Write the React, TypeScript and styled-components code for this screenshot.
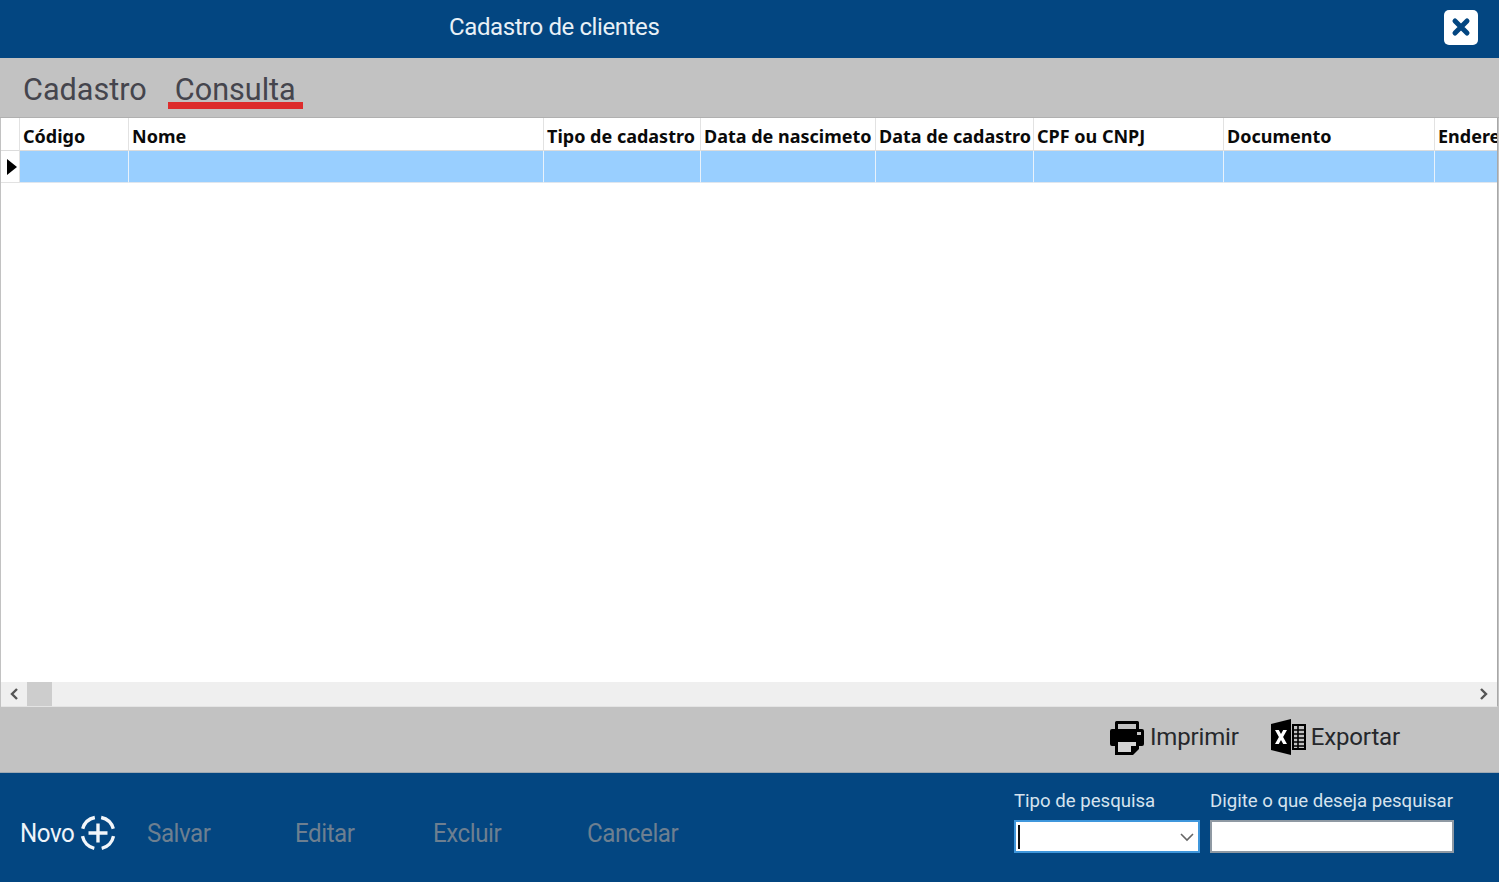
import React from 'react';
import styled, { createGlobalStyle } from 'styled-components';

const GlobalStyle = createGlobalStyle`
  html, body {
    margin: 0;
    padding: 0;
    background: #c2c2c2;
    font-family: Roboto, "Liberation Sans", sans-serif;
  }
`;

const Page = styled.div`
  width: 1499px;
  height: 882px;
  display: flex;
  flex-direction: column;
  overflow: hidden;
`;

const TitleBar = styled.header`
  height: 58px;
  flex: none;
  background: #034681;
  display: flex;
  align-items: center;
  justify-content: space-between;
  padding: 0 21px 4px 449px;
  box-sizing: border-box;
`;

const Title = styled.h1`
  margin: 0;
  font-size: 24px;
  font-weight: 400;
  letter-spacing: -0.4px;
  color: #e8f0f6;
`;

const CloseButton = styled.button`
  width: 34px;
  height: 35px;
  border: 0;
  padding: 0;
  border-radius: 5px;
  background: #fff;
  display: flex;
  align-items: center;
  justify-content: center;
`;

const Tabs = styled.nav`
  height: 60px;
  flex: none;
  display: flex;
  padding-left: 16px;
  gap: 14px;
  box-sizing: border-box;
  border-bottom: 1px solid #b0b0b0;
`;

const Tab = styled.div<{ $active?: boolean }>`
  height: 51px;
  padding: 13px 7px 0;
  box-sizing: border-box;
  font-size: 30.6px;
  line-height: 37px;
  color: #45454d;
  border-bottom: 7px solid ${(p) => (p.$active ? '#dd2c2c' : 'transparent')};
`;

const GridPanel = styled.section`
  height: 589px;
  flex: none;
  margin: 0 1px;
  box-sizing: border-box;
  background: #fff;
  display: flex;
  flex-direction: column;
  border-bottom: 1px solid #e4e4e4;
  border-right: 1px solid #a8a8a8;
`;

const HeaderRow = styled.div`
  display: grid;
  grid-template-columns: 19px 109px 415px 157px 175px 158px 190px 211px 1fr;
  height: 33px;
  flex: none;
`;

const HeaderCell = styled.div`
  font-family: "Noto Sans", "Open Sans", sans-serif;
  font-weight: 700;
  font-size: 18px;
  line-height: 36px;
  color: #0a0a0a;
  padding-left: 3px;
  white-space: nowrap;
  overflow: hidden;
  border-right: 1px solid #e2e2e2;
  border-bottom: 1px solid #dcdcdc;
  &:last-child {
    border-right: 0;
  }
`;

const CornerCell = styled(HeaderCell)`
  padding: 0;
`;

const DataRow = styled(HeaderRow)`
  height: 32px;
`;

const RowMarker = styled.div`
  display: flex;
  align-items: center;
  padding-left: 6px;
  border-right: 1px solid #e2e2e2;
  border-bottom: 1px solid #e2e2e2;
`;

const DataCell = styled.div`
  background: #99cfff;
  border-right: 1px solid #e8f2fb;
  border-bottom: 1px solid #dfe6ee;
  &:last-child {
    border-right: 0;
  }
`;

const GridBody = styled.div`
  flex: 1;
`;

const ScrollBar = styled.div`
  height: 24px;
  flex: none;
  background: #efefef;
  display: flex;
  align-items: center;
`;

const ScrollArrow = styled.div`
  width: 26px;
  flex: none;
  display: flex;
  align-items: center;
  justify-content: center;
  height: 100%;
`;

const ScrollThumb = styled.div`
  width: 25px;
  height: 100%;
  background: #cdcdcd;
`;

const ScrollTrack = styled.div`
  flex: 1;
`;

const ActionBar = styled.div`
  height: 66px;
  flex: none;
  display: flex;
  align-items: center;
  justify-content: flex-end;
  padding: 0 99px 5px 0;
  gap: 31px;
  border-bottom: 1px solid #9fa9b3;
  box-sizing: border-box;
`;

const ActionButton = styled.div`
  display: flex;
  align-items: center;
  gap: 5px;
  font-size: 24px;
  letter-spacing: -0.15px;
  color: #26282c;
`;

const Footer = styled.footer`
  flex: 1;
  background: #034681;
  display: flex;
  justify-content: space-between;
  padding: 0 45px 0 20px;
`;

const CommandList = styled.div`
  display: flex;
  align-items: center;
  padding-top: 10px;
`;

const Command = styled.div<{ $disabled?: boolean; $width: number }>`
  width: ${(p) => p.$width}px;
  display: flex;
  align-items: center;
  gap: 1px;
  font-size: 26px;
  color: ${(p) => (p.$disabled ? '#6d7f90' : '#eef4f9')};
`;

const CommandLabel = styled.span`
  display: inline-block;
  letter-spacing: -0.5px;
  transform: scaleX(0.93);
  transform-origin: left center;
`;

const SearchArea = styled.div`
  display: flex;
  gap: 10px;
  padding-top: 16px;
`;

const SearchField = styled.div`
  display: flex;
  flex-direction: column;
  gap: 7px;
`;

const SearchLabel = styled.label`
  font-size: 18.6px;
  line-height: 24px;
  color: #d6e3ee;
`;

const SelectBox = styled.div`
  width: 186px;
  height: 33px;
  box-sizing: border-box;
  background: #fff;
  border: 2px solid #3f97dc;
  display: flex;
  align-items: center;
  justify-content: space-between;
  padding: 0 3px 0 2px;
`;

const Caret = styled.span`
  width: 2px;
  height: 24px;
  background: #111;
`;

const SearchInput = styled.div`
  width: 244px;
  height: 33px;
  box-sizing: border-box;
  background: #fff;
  border: 2px solid #8f99a3;
`;

const columns = [
  'Código',
  'Nome',
  'Tipo de cadastro',
  'Data de nascimeto',
  'Data de cadastro',
  'CPF ou CNPJ',
  'Documento',
  'Endereço',
];

const CloseIcon = () => (
  <svg width="20" height="20" viewBox="0 0 20 20">
    <path d="M4 4 L16 16 M16 4 L4 16" stroke="#034681" strokeWidth="5" strokeLinecap="round" />
  </svg>
);

const PrinterIcon = () => (
  <svg width="36" height="36" viewBox="0 0 36 36">
    <path d="M6 10V3.5A1.5 1.5 0 0 1 7.5 2h21A1.5 1.5 0 0 1 30 3.5V10h-3V5H9v5z" fill="#000" />
    <path
      d="M3 10h30a2 2 0 0 1 2 2v13a2 2 0 0 1-2 2h-5v-7H8v7H3a2 2 0 0 1-2-2V12a2 2 0 0 1 2-2z"
      fill="#000"
    />
    <rect x="28" y="13" width="4" height="3" fill="#c2c2c2" />
    <path d="M6 20h24v10l-6 6H6z" fill="#000" />
    <path d="M9 23h18v4h-5v6H9z" fill="#d4d4d4" />
  </svg>
);

const ExcelIcon = () => (
  <svg width="36" height="36" viewBox="0 0 36 36">
    <path d="M1 5 L21 0 V36 L1 31 Z" fill="#000" />
    <path d="M5 11h3.8l2.2 4 2.2-4H17l-3.9 7 3.9 7h-3.8l-2.2-4-2.2 4H5l3.9-7z" fill="#fff" />
    <rect x="23" y="6" width="12" height="24" fill="none" stroke="#000" strokeWidth="2" />
    <path d="M24 11h10M24 15h10M24 19h10M24 23h10M24 27h10M28 6v24" stroke="#000" strokeWidth="1.6" />
  </svg>
);

const PlusCircleIcon = () => (
  <svg width="38" height="38" viewBox="0 0 36 36" fill="none" stroke="#f2f6fa" strokeWidth="3.2">
    <path d="M3.5 14A15 15 0 0 1 15 3.3" />
    <path d="M21 3.3A15 15 0 0 1 32.5 14" />
    <path d="M32.7 21A15 15 0 0 1 21.5 32.6" />
    <path d="M14.5 32.6A15 15 0 0 1 3.3 21" />
    <path d="M18 9v18M9 18h18" />
  </svg>
);

const App: React.FC = () => {
  return (
    <Page>
      <GlobalStyle />
      <TitleBar>
        <Title>Cadastro de clientes</Title>
        <CloseButton>
          <CloseIcon />
        </CloseButton>
      </TitleBar>
      <Tabs>
        <Tab>Cadastro</Tab>
        <Tab $active>Consulta</Tab>
      </Tabs>
      <GridPanel>
        <HeaderRow>
          <CornerCell />
          {columns.map((c) => (
            <HeaderCell key={c}>{c}</HeaderCell>
          ))}
        </HeaderRow>
        <DataRow>
          <RowMarker>
            <svg width="10" height="16" viewBox="0 0 10 16">
              <path d="M0 0 L10 8 L0 16 Z" fill="#000" />
            </svg>
          </RowMarker>
          {columns.map((c) => (
            <DataCell key={c} />
          ))}
        </DataRow>
        <GridBody />
        <ScrollBar>
          <ScrollArrow>
            <svg width="10" height="12" viewBox="0 0 10 12">
              <path d="M8 1 L3 6 L8 11" fill="none" stroke="#555" strokeWidth="2.4" />
            </svg>
          </ScrollArrow>
          <ScrollThumb />
          <ScrollTrack />
          <ScrollArrow>
            <svg width="10" height="12" viewBox="0 0 10 12">
              <path d="M2 1 L7 6 L2 11" fill="none" stroke="#555" strokeWidth="2.4" />
            </svg>
          </ScrollArrow>
        </ScrollBar>
      </GridPanel>
      <ActionBar>
        <ActionButton>
          <PrinterIcon />
          Imprimir
        </ActionButton>
        <ActionButton>
          <ExcelIcon />
          Exportar
        </ActionButton>
      </ActionBar>
      <Footer>
        <CommandList>
          <Command $width={127}>
            <CommandLabel>Novo</CommandLabel>
            <PlusCircleIcon />
          </Command>
          <Command $disabled $width={148}>
            <CommandLabel>Salvar</CommandLabel>
          </Command>
          <Command $disabled $width={138}>
            <CommandLabel>Editar</CommandLabel>
          </Command>
          <Command $disabled $width={154}>
            <CommandLabel>Excluir</CommandLabel>
          </Command>
          <Command $disabled $width={100}>
            <CommandLabel>Cancelar</CommandLabel>
          </Command>
        </CommandList>
        <SearchArea>
          <SearchField>
            <SearchLabel>Tipo de pesquisa</SearchLabel>
            <SelectBox>
              <Caret />
              <svg width="16" height="10" viewBox="0 0 16 10">
                <path d="M2 2 L8 8 L14 2" fill="none" stroke="#666" strokeWidth="1.6" />
              </svg>
            </SelectBox>
          </SearchField>
          <SearchField>
            <SearchLabel>Digite o que deseja pesquisar</SearchLabel>
            <SearchInput />
          </SearchField>
        </SearchArea>
      </Footer>
    </Page>
  );
};

export default App;
